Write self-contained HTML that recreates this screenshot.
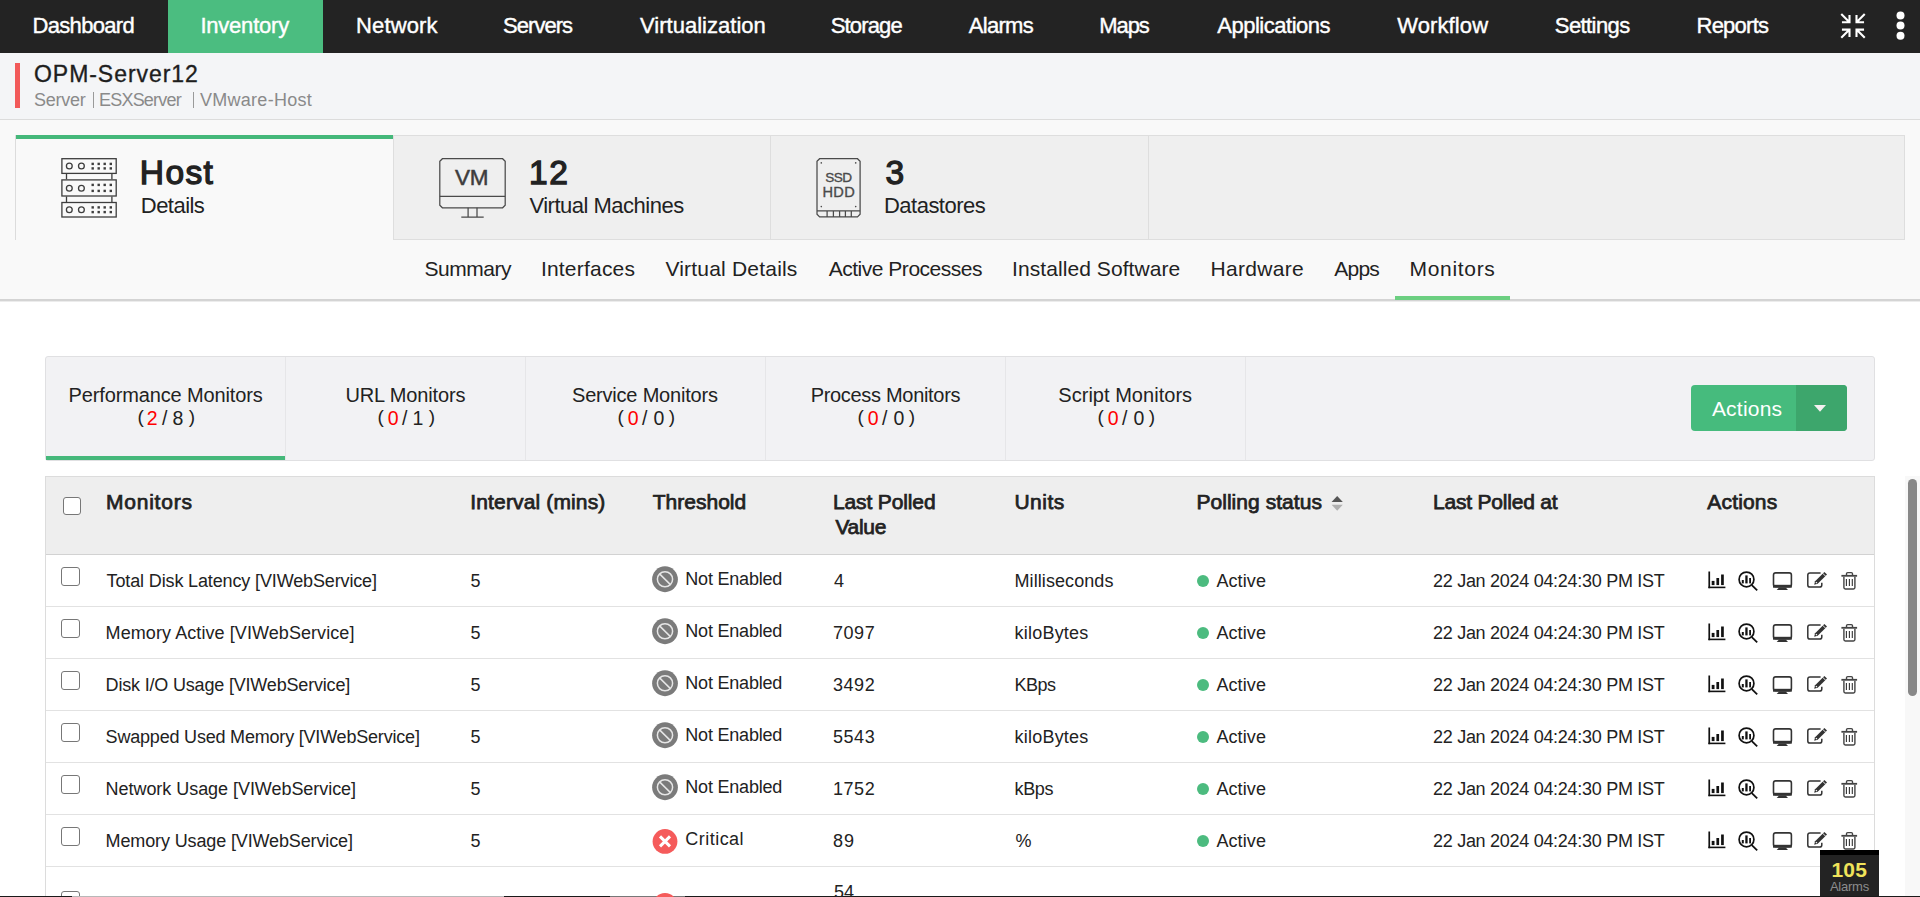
<!DOCTYPE html>
<html><head><meta charset="utf-8"><style>
html,body{margin:0;padding:0;width:1920px;height:897px;overflow:hidden;background:#fff;font-family:'Liberation Sans', sans-serif;}
.t{position:absolute;white-space:pre;}
.b{position:absolute;box-sizing:border-box;}
svg{position:absolute;overflow:visible;}
</style></head><body>
<!-- nav -->
<div class="b" style="left:0;top:0;width:1920px;height:53px;background:#232323"></div>
<div class="b" style="left:168px;top:0;width:155px;height:53px;background:#4bbd80"></div>
<!-- header -->
<div class="b" style="left:0;top:53px;width:1920px;height:66px;background:#f4f5f7"></div>
<div class="b" style="left:0;top:119px;width:1920px;height:1px;background:#dcdcdc"></div>
<div class="b" style="left:15px;top:63px;width:5px;height:45px;background:#f25a5a"></div>
<div class="b" style="left:93px;top:92px;width:1.2px;height:16px;background:#9a9a9a"></div>
<div class="b" style="left:192.5px;top:92px;width:1.2px;height:16px;background:#9a9a9a"></div>
<!-- section -->
<div class="b" style="left:0;top:120px;width:1920px;height:179px;background:#f9f9f9"></div>
<div class="b" style="left:0;top:299px;width:1920px;height:1.5px;background:#d4d4d4"></div>
<div class="b" style="left:0;top:300.5px;width:1920px;height:1.5px;background:#ececec"></div>
<!-- cards -->
<div class="b" style="left:15px;top:135px;width:1px;height:105px;background:#dcdcdc"></div>
<div class="b" style="left:16px;top:135px;width:377px;height:4px;background:#45b87a"></div>
<div class="b" style="left:393px;top:135px;width:1512px;height:105px;background:#efefef;border:1px solid #dedede;border-left:1px solid #dedede"></div>
<div class="b" style="left:770px;top:136px;width:1px;height:103px;background:#dedede"></div>
<div class="b" style="left:1148px;top:136px;width:1px;height:103px;background:#dedede"></div>
<!-- tab underline -->
<div class="b" style="left:1395px;top:296px;width:115px;height:3.5px;background:#6ccf81"></div>
<!-- monitor type panel -->
<div class="b" style="left:45px;top:356px;width:1830px;height:105px;background:#f2f2f4;border:1px solid #e0e0e2;border-radius:3px"></div>
<div class="b" style="left:285px;top:357px;width:1px;height:103px;background:#e6e6e8"></div>
<div class="b" style="left:525px;top:357px;width:1px;height:103px;background:#e6e6e8"></div>
<div class="b" style="left:765px;top:357px;width:1px;height:103px;background:#e6e6e8"></div>
<div class="b" style="left:1005px;top:357px;width:1px;height:103px;background:#e6e6e8"></div>
<div class="b" style="left:1245px;top:357px;width:1px;height:103px;background:#e6e6e8"></div>
<div class="b" style="left:46px;top:456px;width:239px;height:4px;background:#45b87a"></div>
<!-- actions button -->
<div class="b" style="left:1691px;top:385px;width:156px;height:46px;background:#46bb7d;border-radius:4px;overflow:hidden"><div class="b" style="left:105px;top:0;width:51px;height:46px;background:#3da66c"></div></div>
<svg style="left:0;top:0" width="1920" height="897"><path d="M1814 405 L1826 405 L1820 411.8 Z" fill="#f4f0f0"/></svg>
<!-- table -->
<div class="b" style="left:45px;top:476px;width:1830px;height:430px;border:1px solid #dcdcdc;background:#fff"></div>
<div class="b" style="left:46px;top:477px;width:1828px;height:77px;background:#eeeeee"></div>
<div class="b" style="left:46px;top:553.5px;width:1828px;height:1.5px;background:#d2d2d2"></div>
<div class="b" style="left:46px;top:606px;width:1828px;height:1px;background:#e2e2e2"></div>
<div class="b" style="left:46px;top:658px;width:1828px;height:1px;background:#e2e2e2"></div>
<div class="b" style="left:46px;top:710px;width:1828px;height:1px;background:#e2e2e2"></div>
<div class="b" style="left:46px;top:762px;width:1828px;height:1px;background:#e2e2e2"></div>
<div class="b" style="left:46px;top:814px;width:1828px;height:1px;background:#e2e2e2"></div>
<div class="b" style="left:46px;top:866px;width:1828px;height:1px;background:#e2e2e2"></div>
<!-- scrollbar -->
<div class="b" style="left:1905px;top:476px;width:15px;height:421px;background:#f8f8f8"></div>
<div class="b" style="left:1908px;top:479px;width:9px;height:217px;background:#888;border-radius:5px"></div>
<!-- checkboxes -->
<div class="b" style="left:63px;top:497px;width:18px;height:18px;border:1.8px solid #777;border-radius:3px;background:#fff"></div>
<div class="b" style="left:61px;top:567px;width:19px;height:19px;border:1.8px solid #777;border-radius:3px;background:#fff"></div>
<div class="b" style="left:61px;top:619px;width:19px;height:19px;border:1.8px solid #777;border-radius:3px;background:#fff"></div>
<div class="b" style="left:61px;top:671px;width:19px;height:19px;border:1.8px solid #777;border-radius:3px;background:#fff"></div>
<div class="b" style="left:61px;top:723px;width:19px;height:19px;border:1.8px solid #777;border-radius:3px;background:#fff"></div>
<div class="b" style="left:61px;top:775px;width:19px;height:19px;border:1.8px solid #777;border-radius:3px;background:#fff"></div>
<div class="b" style="left:61px;top:827px;width:19px;height:19px;border:1.8px solid #777;border-radius:3px;background:#fff"></div>
<div class="b" style="left:61px;top:891px;width:19px;height:19px;border:1.8px solid #777;border-radius:3px;background:#fff"></div>
<!-- alarm badge -->
<div class="b" style="left:1820px;top:850px;width:59px;height:47px;background:#232323"></div>
<div class="b" style="left:1820px;top:850px;width:59px;height:5px;background:#000"></div>
<!-- bottom line -->
<div class="b" style="left:0;top:896px;width:1920px;height:1px;background:#1a1a1a"></div>
<div class="b" style="left:72px;top:896px;width:432px;height:1px;background:#b8b8b8"></div>
<div class="b" style="left:610px;top:896px;width:75px;height:1px;background:#777"></div>
<!-- icons svg -->
<svg style="left:0;top:0" width="1920" height="897">
 <!-- compress -->
 <g stroke="#fff" stroke-width="2.1" fill="none" stroke-linecap="square">
  <path d="M1842 14.8 L1849 21.8 M1843 22.3 H1849.5 V16"/>
  <path d="M1864 14.8 L1857 21.8 M1863 22.3 H1856.5 V16"/>
  <path d="M1842 37 L1849 30 M1843 29.6 H1849.5 V36"/>
  <path d="M1864 37 L1857 30 M1863 29.6 H1856.5 V36"/>
 </g>
 <circle cx="1900.5" cy="15.4" r="4" fill="#fff"/>
 <circle cx="1900.5" cy="25.6" r="4" fill="#fff"/>
 <circle cx="1900.5" cy="35.7" r="4" fill="#fff"/>
 <!-- server icon -->
 <g stroke="#3d3d3d" stroke-width="1.3" fill="none">
  <rect x="61.9" y="158.7" width="54.3" height="14.7"/>
  <rect x="61.9" y="179.9" width="54.3" height="16.1"/>
  <rect x="61.9" y="202.5" width="54.3" height="14.5"/>
  <path d="M66.5 174 V179.3 M111.9 174 V179.3 M66.5 196.6 V201.9 M111.9 196.6 V201.9"/>
  <circle cx="69.3" cy="166" r="2.9"/><circle cx="81.4" cy="166" r="2.9"/>
  <circle cx="69.3" cy="188.3" r="2.9"/><circle cx="81.4" cy="188.3" r="2.9"/>
  <circle cx="69.3" cy="209.7" r="2.9"/><circle cx="81.4" cy="209.7" r="2.9"/>
 </g>
 <g fill="#3d3d3d">
  <rect x="91.5" y="162.7" width="2.4" height="2.4"/><rect x="97.5" y="162.7" width="2.4" height="2.4"/><rect x="103.5" y="162.7" width="2.4" height="2.4"/><rect x="109.6" y="162.7" width="2.4" height="2.4"/><rect x="91.5" y="167.2" width="2.4" height="2.4"/><rect x="97.5" y="167.2" width="2.4" height="2.4"/><rect x="103.5" y="167.2" width="2.4" height="2.4"/><rect x="109.6" y="167.2" width="2.4" height="2.4"/><rect x="91.5" y="183.7" width="2.4" height="2.4"/><rect x="97.5" y="183.7" width="2.4" height="2.4"/><rect x="103.5" y="183.7" width="2.4" height="2.4"/><rect x="109.6" y="183.7" width="2.4" height="2.4"/><rect x="91.5" y="189.7" width="2.4" height="2.4"/><rect x="97.5" y="189.7" width="2.4" height="2.4"/><rect x="103.5" y="189.7" width="2.4" height="2.4"/><rect x="109.6" y="189.7" width="2.4" height="2.4"/><rect x="91.5" y="206.2" width="2.4" height="2.4"/><rect x="97.5" y="206.2" width="2.4" height="2.4"/><rect x="103.5" y="206.2" width="2.4" height="2.4"/><rect x="109.6" y="206.2" width="2.4" height="2.4"/><rect x="91.5" y="210.9" width="2.4" height="2.4"/><rect x="97.5" y="210.9" width="2.4" height="2.4"/><rect x="103.5" y="210.9" width="2.4" height="2.4"/><rect x="109.6" y="210.9" width="2.4" height="2.4"/>
 </g>
 <!-- VM icon -->
 <g stroke="#4a4a4a" stroke-width="1.25" fill="none">
  <path d="M442.4 158.7 H502.6 L505.2 161.3 V205.2 L502.6 207.8 H442.4 L439.8 205.2 V161.3 Z"/>
  <path d="M439.8 196.3 H505.2 M468.1 207.8 V216.6 M477 207.8 V216.6 M461.3 217.2 H483.7"/>
 </g>
 <text x="471.6" y="184.9" text-anchor="middle" font-family="'Liberation Sans', sans-serif" font-size="22.5" font-weight="400" fill="#3d3d3d" stroke="#3d3d3d" stroke-width="0.5" letter-spacing="-0.4">VM</text>
 <!-- SSD icon -->
 <g stroke="#4a4a4a" stroke-width="1.25" fill="none">
  <path d="M819.6 158.7 H857.5 L860.1 161.3 V214.3 L857.5 216.9 H819.6 L817 214.3 V161.3 Z"/>
  <path d="M817 210.9 H860.1 M827.1 210.9 V216.9 M833.4 210.9 V216.9 M839.6 210.9 V216.9 M845.4 210.9 V216.9 M851.3 210.9 V216.9"/>
 </g>
 <g fill="#4a4a4a"><circle cx="821.3" cy="162.9" r="0.8"/><circle cx="855.7" cy="162.9" r="0.8"/><circle cx="821.3" cy="206.6" r="0.8"/><circle cx="855.7" cy="206.6" r="0.8"/></g>
 <text x="838.3" y="181.6" text-anchor="middle" font-family="'Liberation Sans', sans-serif" font-size="13.6" fill="#4a4a4a" stroke="#4a4a4a" stroke-width="0.35" letter-spacing="-0.6">SSD</text>
 <text x="838.8" y="196.6" text-anchor="middle" font-family="'Liberation Sans', sans-serif" font-size="14.6" fill="#4a4a4a" stroke="#4a4a4a" stroke-width="0.35" letter-spacing="0.4">HDD</text>
 <!-- sort icon -->
 <path d="M1331.6 502 L1337.2 496 L1342.8 502 Z" fill="#555"/>
 <path d="M1331.6 504.7 L1337.2 510.8 L1342.8 504.7 Z" fill="#b0b0b0"/>
 <defs>
<g id="notenabled"><circle cx="665" cy="579.25" r="12.9" fill="#7b7b7b"/><circle cx="665" cy="579.25" r="7.6" fill="none" stroke="#e6e6e6" stroke-width="1.5"/><path d="M659.6 573.9 L670.4 584.6" stroke="#e6e6e6" stroke-width="1.5"/></g>
<g id="acts">
 <g fill="#111"><rect x="1708.4" y="571.5" width="1.7" height="16.7"/><rect x="1708.4" y="586.6" width="17" height="1.6"/>
 <rect x="1711.7" y="580.9" width="2.8" height="4.2"/><rect x="1716.4" y="578" width="2.7" height="7.1"/><rect x="1721.1" y="574.5" width="2.7" height="10.6"/>
 <rect x="1741.8" y="580" width="2" height="3.4"/><rect x="1745.3" y="575.4" width="2.3" height="8"/><rect x="1749.2" y="578" width="1.8" height="5.4"/></g>
 <circle cx="1746.5" cy="579.45" r="7.4" fill="none" stroke="#111" stroke-width="1.7"/>
 <path d="M1751.8 585.1 L1757.2 590.4" stroke="#111" stroke-width="1.8"/>
 <rect x="1773.5" y="572.9" width="17.9" height="13.8" rx="2.2" fill="none" stroke="#333" stroke-width="1.6"/>
 <rect x="1773" y="584.8" width="18.8" height="2.9" fill="#333"/>
 <path d="M1779 587.6 H1785.7 L1788 589.9 H1776.7 Z" fill="#333"/>
 <path d="M1820.6 572.9 H1810 Q1807.8 572.9 1807.8 575.1 V584.9 Q1807.8 587.1 1810 587.1 H1819.6 Q1821.8 587.1 1821.8 584.9 V582.7" fill="none" stroke="#333" stroke-width="1.5"/>
 <path d="M1814.2 584.7 L1815.1 581.2 L1824.4 571.9 L1827 574.5 L1817.7 583.8 Z" fill="#333"/>
 <path d="M1822.6 573.2 L1825.7 576.3" stroke="#fff" stroke-width="0.9"/>
 <path d="M1815.9 582.1 L1816.9 583.1" stroke="#fff" stroke-width="1.2"/>
 <rect x="1841.4" y="574.9" width="15.7" height="1.8" fill="#444"/>
 <path d="M1846.5 574.9 V573.8 Q1846.5 572.6 1847.7 572.6 H1851.3 Q1852.5 572.6 1852.5 573.8 V574.9" fill="none" stroke="#444" stroke-width="1.4"/>
 <path d="M1843.9 576.7 V587.6 Q1843.9 589 1845.3 589 H1853.5 Q1854.9 589 1854.9 587.6 V576.7" fill="none" stroke="#444" stroke-width="1.4"/>
 <path d="M1846.4 579 V585.9 M1849.4 579 V585.9 M1852.3 579 V585.9" stroke="#333" stroke-width="1.1"/>
</g>
</defs>
<use href="#notenabled" y="0"/>
<use href="#acts" y="0"/>
<circle cx="1203" cy="581" r="6" fill="#4cbb7f"/>
<use href="#notenabled" y="52"/>
<use href="#acts" y="52"/>
<circle cx="1203" cy="633" r="6" fill="#4cbb7f"/>
<use href="#notenabled" y="104"/>
<use href="#acts" y="104"/>
<circle cx="1203" cy="685" r="6" fill="#4cbb7f"/>
<use href="#notenabled" y="156"/>
<use href="#acts" y="156"/>
<circle cx="1203" cy="737" r="6" fill="#4cbb7f"/>
<use href="#notenabled" y="208"/>
<use href="#acts" y="208"/>
<circle cx="1203" cy="789" r="6" fill="#4cbb7f"/>
<use href="#acts" y="260"/>
<circle cx="1203" cy="841" r="6" fill="#4cbb7f"/>
<circle cx="665" cy="841.4" r="12.4" fill="#f55b5b"/><path d="M660 836.4 L670 846.4 M670 836.4 L660 846.4" stroke="#fff" stroke-width="3"/>
<circle cx="665" cy="905.4" r="12.4" fill="#f55b5b"/>
</svg>

<div class="t" style="left:32.60px;top:15.20px;font-size:22px;line-height:22px;font-weight:400;color:#fff;letter-spacing:-0.700px;-webkit-text-stroke:0.4px #fff;">Dashboard</div><div class="t" style="left:200.40px;top:15.20px;font-size:22px;line-height:22px;font-weight:400;color:#fff;letter-spacing:-0.213px;-webkit-text-stroke:0.4px #fff;">Inventory</div><div class="t" style="left:356.00px;top:15.20px;font-size:22px;line-height:22px;font-weight:400;color:#fff;letter-spacing:0.133px;-webkit-text-stroke:0.4px #fff;">Network</div><div class="t" style="left:503.00px;top:15.20px;font-size:22px;line-height:22px;font-weight:400;color:#fff;letter-spacing:-0.950px;-webkit-text-stroke:0.4px #fff;">Servers</div><div class="t" style="left:640.00px;top:15.20px;font-size:22px;line-height:22px;font-weight:400;color:#fff;letter-spacing:0.023px;-webkit-text-stroke:0.4px #fff;">Virtualization</div><div class="t" style="left:830.70px;top:15.20px;font-size:22px;line-height:22px;font-weight:400;color:#fff;letter-spacing:-0.833px;-webkit-text-stroke:0.4px #fff;">Storage</div><div class="t" style="left:968.70px;top:15.20px;font-size:22px;line-height:22px;font-weight:400;color:#fff;letter-spacing:-0.680px;-webkit-text-stroke:0.4px #fff;">Alarms</div><div class="t" style="left:1099.30px;top:15.20px;font-size:22px;line-height:22px;font-weight:400;color:#fff;letter-spacing:-1.100px;-webkit-text-stroke:0.4px #fff;">Maps</div><div class="t" style="left:1217.20px;top:15.20px;font-size:22px;line-height:22px;font-weight:400;color:#fff;letter-spacing:-0.473px;-webkit-text-stroke:0.4px #fff;">Applications</div><div class="t" style="left:1397.20px;top:15.20px;font-size:22px;line-height:22px;font-weight:400;color:#fff;letter-spacing:0.114px;-webkit-text-stroke:0.4px #fff;">Workflow</div><div class="t" style="left:1554.80px;top:15.20px;font-size:22px;line-height:22px;font-weight:400;color:#fff;letter-spacing:-0.586px;-webkit-text-stroke:0.4px #fff;">Settings</div><div class="t" style="left:1696.50px;top:15.20px;font-size:22px;line-height:22px;font-weight:400;color:#fff;letter-spacing:-0.750px;-webkit-text-stroke:0.4px #fff;">Reports</div><div class="t" style="left:34.00px;top:62.70px;font-size:23px;line-height:23px;font-weight:400;color:#1e1e1e;letter-spacing:0.955px;-webkit-text-stroke:0.35px #1e1e1e;">OPM-Server12</div><div class="t" style="left:34.00px;top:91.30px;font-size:18px;line-height:18px;font-weight:400;color:#8a8a8a;letter-spacing:-0.240px;">Server</div><div class="t" style="left:99.00px;top:91.30px;font-size:18px;line-height:18px;font-weight:400;color:#8a8a8a;letter-spacing:-0.788px;">ESXServer</div><div class="t" style="left:200.00px;top:91.30px;font-size:18px;line-height:18px;font-weight:400;color:#8a8a8a;letter-spacing:0.270px;">VMware-Host</div><div class="t" style="left:139.80px;top:155.90px;font-size:33.5px;line-height:33.5px;font-weight:400;color:#222;letter-spacing:1.400px;-webkit-text-stroke:1.3px #222;">Host</div><div class="t" style="left:140.80px;top:195.00px;font-size:22px;line-height:22px;font-weight:400;color:#222;letter-spacing:-0.533px;">Details</div><div class="t" style="left:529.00px;top:156.20px;font-size:33.5px;line-height:33.5px;font-weight:400;color:#222;letter-spacing:1.700px;-webkit-text-stroke:1.3px #222;">12</div><div class="t" style="left:529.40px;top:195.00px;font-size:22px;line-height:22px;font-weight:400;color:#222;letter-spacing:-0.493px;">Virtual Machines</div><div class="t" style="left:885.40px;top:156.00px;font-size:33.5px;line-height:33.5px;font-weight:400;color:#222;letter-spacing:0.000px;-webkit-text-stroke:1.3px #222;">3</div><div class="t" style="left:884.00px;top:195.00px;font-size:22px;line-height:22px;font-weight:400;color:#222;letter-spacing:-0.522px;">Datastores</div><div class="t" style="left:424.40px;top:257.90px;font-size:21px;line-height:21px;font-weight:400;color:#222;letter-spacing:-0.450px;">Summary</div><div class="t" style="left:540.90px;top:257.90px;font-size:21px;line-height:21px;font-weight:400;color:#222;letter-spacing:0.211px;">Interfaces</div><div class="t" style="left:665.40px;top:257.90px;font-size:21px;line-height:21px;font-weight:400;color:#222;letter-spacing:0.200px;">Virtual Details</div><div class="t" style="left:828.70px;top:257.90px;font-size:21px;line-height:21px;font-weight:400;color:#222;letter-spacing:-0.480px;">Active Processes</div><div class="t" style="left:1012.00px;top:257.90px;font-size:21px;line-height:21px;font-weight:400;color:#222;letter-spacing:0.076px;">Installed Software</div><div class="t" style="left:1210.40px;top:257.90px;font-size:21px;line-height:21px;font-weight:400;color:#222;letter-spacing:0.329px;">Hardware</div><div class="t" style="left:1334.20px;top:257.90px;font-size:21px;line-height:21px;font-weight:400;color:#222;letter-spacing:-0.733px;">Apps</div><div class="t" style="left:1409.60px;top:257.90px;font-size:21px;line-height:21px;font-weight:400;color:#222;letter-spacing:0.671px;">Monitors</div><div class="t" style="left:68.50px;top:384.90px;font-size:20px;line-height:20px;font-weight:400;color:#222;letter-spacing:-0.132px;">Performance Monitors</div><div class="t" style="left:137.60px;top:407.20px;font-size:19px;line-height:19px;font-weight:400;color:#222;letter-spacing:0.000px;">(</div><div class="t" style="left:146.65px;top:408.50px;font-size:19.5px;line-height:19.5px;font-weight:400;color:#f00;letter-spacing:0.000px;">2</div><div class="t" style="left:161.90px;top:408.50px;font-size:19.5px;line-height:19.5px;font-weight:400;color:#222;letter-spacing:0.000px;">/</div><div class="t" style="left:172.40px;top:408.50px;font-size:19.5px;line-height:19.5px;font-weight:400;color:#222;letter-spacing:0.000px;">8</div><div class="t" style="left:188.70px;top:407.20px;font-size:19px;line-height:19px;font-weight:400;color:#222;letter-spacing:0.000px;">)</div><div class="t" style="left:345.40px;top:384.90px;font-size:20px;line-height:20px;font-weight:400;color:#222;letter-spacing:-0.136px;">URL Monitors</div><div class="t" style="left:377.60px;top:407.20px;font-size:19px;line-height:19px;font-weight:400;color:#222;letter-spacing:0.000px;">(</div><div class="t" style="left:387.65px;top:408.50px;font-size:19.5px;line-height:19.5px;font-weight:400;color:#f00;letter-spacing:0.000px;">0</div><div class="t" style="left:401.90px;top:408.50px;font-size:19.5px;line-height:19.5px;font-weight:400;color:#222;letter-spacing:0.000px;">/</div><div class="t" style="left:412.40px;top:408.50px;font-size:19.5px;line-height:19.5px;font-weight:400;color:#222;letter-spacing:0.000px;">1</div><div class="t" style="left:428.70px;top:407.20px;font-size:19px;line-height:19px;font-weight:400;color:#222;letter-spacing:0.000px;">)</div><div class="t" style="left:572.00px;top:384.90px;font-size:20px;line-height:20px;font-weight:400;color:#222;letter-spacing:-0.200px;">Service Monitors</div><div class="t" style="left:617.60px;top:407.20px;font-size:19px;line-height:19px;font-weight:400;color:#222;letter-spacing:0.000px;">(</div><div class="t" style="left:627.65px;top:408.50px;font-size:19.5px;line-height:19.5px;font-weight:400;color:#f00;letter-spacing:0.000px;">0</div><div class="t" style="left:641.90px;top:408.50px;font-size:19.5px;line-height:19.5px;font-weight:400;color:#222;letter-spacing:0.000px;">/</div><div class="t" style="left:653.40px;top:408.50px;font-size:19.5px;line-height:19.5px;font-weight:400;color:#222;letter-spacing:0.000px;">0</div><div class="t" style="left:668.70px;top:407.20px;font-size:19px;line-height:19px;font-weight:400;color:#222;letter-spacing:0.000px;">)</div><div class="t" style="left:810.70px;top:384.90px;font-size:20px;line-height:20px;font-weight:400;color:#222;letter-spacing:-0.313px;">Process Monitors</div><div class="t" style="left:857.60px;top:407.20px;font-size:19px;line-height:19px;font-weight:400;color:#222;letter-spacing:0.000px;">(</div><div class="t" style="left:867.65px;top:408.50px;font-size:19.5px;line-height:19.5px;font-weight:400;color:#f00;letter-spacing:0.000px;">0</div><div class="t" style="left:881.90px;top:408.50px;font-size:19.5px;line-height:19.5px;font-weight:400;color:#222;letter-spacing:0.000px;">/</div><div class="t" style="left:893.40px;top:408.50px;font-size:19.5px;line-height:19.5px;font-weight:400;color:#222;letter-spacing:0.000px;">0</div><div class="t" style="left:908.70px;top:407.20px;font-size:19px;line-height:19px;font-weight:400;color:#222;letter-spacing:0.000px;">)</div><div class="t" style="left:1058.30px;top:384.90px;font-size:20px;line-height:20px;font-weight:400;color:#222;letter-spacing:0.029px;">Script Monitors</div><div class="t" style="left:1097.60px;top:407.20px;font-size:19px;line-height:19px;font-weight:400;color:#222;letter-spacing:0.000px;">(</div><div class="t" style="left:1107.65px;top:408.50px;font-size:19.5px;line-height:19.5px;font-weight:400;color:#f00;letter-spacing:0.000px;">0</div><div class="t" style="left:1121.90px;top:408.50px;font-size:19.5px;line-height:19.5px;font-weight:400;color:#222;letter-spacing:0.000px;">/</div><div class="t" style="left:1133.40px;top:408.50px;font-size:19.5px;line-height:19.5px;font-weight:400;color:#222;letter-spacing:0.000px;">0</div><div class="t" style="left:1148.70px;top:407.20px;font-size:19px;line-height:19px;font-weight:400;color:#222;letter-spacing:0.000px;">)</div><div class="t" style="left:1711.90px;top:398.00px;font-size:21px;line-height:21px;font-weight:400;color:#fff;letter-spacing:0.217px;">Actions</div><div class="t" style="left:105.90px;top:491.00px;font-size:21px;line-height:21px;font-weight:400;color:#222;letter-spacing:0.800px;-webkit-text-stroke:0.75px #222;">Monitors</div><div class="t" style="left:470.30px;top:491.00px;font-size:21px;line-height:21px;font-weight:400;color:#222;letter-spacing:0.143px;-webkit-text-stroke:0.75px #222;">Interval (mins)</div><div class="t" style="left:652.80px;top:491.00px;font-size:21px;line-height:21px;font-weight:400;color:#222;letter-spacing:0.000px;-webkit-text-stroke:0.75px #222;">Threshold</div><div class="t" style="left:832.90px;top:491.00px;font-size:21px;line-height:21px;font-weight:400;color:#222;letter-spacing:-0.120px;-webkit-text-stroke:0.75px #222;">Last Polled</div><div class="t" style="left:835.50px;top:515.90px;font-size:21px;line-height:21px;font-weight:400;color:#222;letter-spacing:-0.325px;-webkit-text-stroke:0.75px #222;">Value</div><div class="t" style="left:1014.40px;top:491.00px;font-size:21px;line-height:21px;font-weight:400;color:#222;letter-spacing:0.525px;-webkit-text-stroke:0.75px #222;">Units</div><div class="t" style="left:1196.40px;top:491.00px;font-size:21px;line-height:21px;font-weight:400;color:#222;letter-spacing:0.046px;-webkit-text-stroke:0.75px #222;">Polling status</div><div class="t" style="left:1433.00px;top:491.00px;font-size:21px;line-height:21px;font-weight:400;color:#222;letter-spacing:-0.208px;-webkit-text-stroke:0.75px #222;">Last Polled at</div><div class="t" style="left:1707.30px;top:491.00px;font-size:21px;line-height:21px;font-weight:400;color:#222;letter-spacing:0.167px;-webkit-text-stroke:0.75px #222;">Actions</div><div class="t" style="left:106.60px;top:572.00px;font-size:18px;line-height:18px;font-weight:400;color:#222;letter-spacing:-0.137px;">Total Disk Latency [VIWebService]</div><div class="t" style="left:470.40px;top:572.00px;font-size:18px;line-height:18px;font-weight:400;color:#222;letter-spacing:0.000px;">5</div><div class="t" style="left:685.30px;top:570.00px;font-size:18px;line-height:18px;font-weight:400;color:#222;letter-spacing:-0.205px;">Not Enabled</div><div class="t" style="left:834.00px;top:572.00px;font-size:18px;line-height:18px;font-weight:400;color:#222;letter-spacing:0.000px;">4</div><div class="t" style="left:1014.50px;top:572.00px;font-size:18px;line-height:18px;font-weight:400;color:#222;letter-spacing:0.082px;">Milliseconds</div><div class="t" style="left:1216.40px;top:572.00px;font-size:18px;line-height:18px;font-weight:400;color:#222;letter-spacing:0.100px;">Active</div><div class="t" style="left:1433.00px;top:572.00px;font-size:18px;line-height:18px;font-weight:400;color:#222;letter-spacing:-0.285px;">22 Jan 2024 04:24:30 PM IST</div><div class="t" style="left:105.60px;top:624.00px;font-size:18px;line-height:18px;font-weight:400;color:#222;letter-spacing:0.078px;">Memory Active [VIWebService]</div><div class="t" style="left:470.40px;top:624.00px;font-size:18px;line-height:18px;font-weight:400;color:#222;letter-spacing:0.000px;">5</div><div class="t" style="left:685.30px;top:622.00px;font-size:18px;line-height:18px;font-weight:400;color:#222;letter-spacing:-0.205px;">Not Enabled</div><div class="t" style="left:833.00px;top:624.00px;font-size:18px;line-height:18px;font-weight:400;color:#222;letter-spacing:0.533px;">7097</div><div class="t" style="left:1014.50px;top:624.00px;font-size:18px;line-height:18px;font-weight:400;color:#222;letter-spacing:0.225px;">kiloBytes</div><div class="t" style="left:1216.40px;top:624.00px;font-size:18px;line-height:18px;font-weight:400;color:#222;letter-spacing:0.100px;">Active</div><div class="t" style="left:1433.00px;top:624.00px;font-size:18px;line-height:18px;font-weight:400;color:#222;letter-spacing:-0.285px;">22 Jan 2024 04:24:30 PM IST</div><div class="t" style="left:105.60px;top:676.00px;font-size:18px;line-height:18px;font-weight:400;color:#222;letter-spacing:-0.182px;">Disk I/O Usage [VIWebService]</div><div class="t" style="left:470.40px;top:676.00px;font-size:18px;line-height:18px;font-weight:400;color:#222;letter-spacing:0.000px;">5</div><div class="t" style="left:685.30px;top:674.00px;font-size:18px;line-height:18px;font-weight:400;color:#222;letter-spacing:-0.205px;">Not Enabled</div><div class="t" style="left:833.00px;top:676.00px;font-size:18px;line-height:18px;font-weight:400;color:#222;letter-spacing:0.533px;">3492</div><div class="t" style="left:1014.50px;top:676.00px;font-size:18px;line-height:18px;font-weight:400;color:#222;letter-spacing:-0.467px;">KBps</div><div class="t" style="left:1216.40px;top:676.00px;font-size:18px;line-height:18px;font-weight:400;color:#222;letter-spacing:0.100px;">Active</div><div class="t" style="left:1433.00px;top:676.00px;font-size:18px;line-height:18px;font-weight:400;color:#222;letter-spacing:-0.285px;">22 Jan 2024 04:24:30 PM IST</div><div class="t" style="left:105.60px;top:728.00px;font-size:18px;line-height:18px;font-weight:400;color:#222;letter-spacing:-0.197px;">Swapped Used Memory [VIWebService]</div><div class="t" style="left:470.40px;top:728.00px;font-size:18px;line-height:18px;font-weight:400;color:#222;letter-spacing:0.000px;">5</div><div class="t" style="left:685.30px;top:726.00px;font-size:18px;line-height:18px;font-weight:400;color:#222;letter-spacing:-0.205px;">Not Enabled</div><div class="t" style="left:833.00px;top:728.00px;font-size:18px;line-height:18px;font-weight:400;color:#222;letter-spacing:0.533px;">5543</div><div class="t" style="left:1014.50px;top:728.00px;font-size:18px;line-height:18px;font-weight:400;color:#222;letter-spacing:0.225px;">kiloBytes</div><div class="t" style="left:1216.40px;top:728.00px;font-size:18px;line-height:18px;font-weight:400;color:#222;letter-spacing:0.100px;">Active</div><div class="t" style="left:1433.00px;top:728.00px;font-size:18px;line-height:18px;font-weight:400;color:#222;letter-spacing:-0.285px;">22 Jan 2024 04:24:30 PM IST</div><div class="t" style="left:105.60px;top:780.00px;font-size:18px;line-height:18px;font-weight:400;color:#222;letter-spacing:-0.048px;">Network Usage [VIWebService]</div><div class="t" style="left:470.40px;top:780.00px;font-size:18px;line-height:18px;font-weight:400;color:#222;letter-spacing:0.000px;">5</div><div class="t" style="left:685.30px;top:778.00px;font-size:18px;line-height:18px;font-weight:400;color:#222;letter-spacing:-0.205px;">Not Enabled</div><div class="t" style="left:833.00px;top:780.00px;font-size:18px;line-height:18px;font-weight:400;color:#222;letter-spacing:0.533px;">1752</div><div class="t" style="left:1014.50px;top:780.00px;font-size:18px;line-height:18px;font-weight:400;color:#222;letter-spacing:-0.367px;">kBps</div><div class="t" style="left:1216.40px;top:780.00px;font-size:18px;line-height:18px;font-weight:400;color:#222;letter-spacing:0.100px;">Active</div><div class="t" style="left:1433.00px;top:780.00px;font-size:18px;line-height:18px;font-weight:400;color:#222;letter-spacing:-0.285px;">22 Jan 2024 04:24:30 PM IST</div><div class="t" style="left:105.60px;top:832.00px;font-size:18px;line-height:18px;font-weight:400;color:#222;letter-spacing:-0.131px;">Memory Usage [VIWebService]</div><div class="t" style="left:470.40px;top:832.00px;font-size:18px;line-height:18px;font-weight:400;color:#222;letter-spacing:0.000px;">5</div><div class="t" style="left:685.30px;top:830.00px;font-size:18px;line-height:18px;font-weight:400;color:#222;letter-spacing:0.471px;">Critical</div><div class="t" style="left:833.00px;top:832.00px;font-size:18px;line-height:18px;font-weight:400;color:#222;letter-spacing:1.100px;">89</div><div class="t" style="left:1015.50px;top:832.00px;font-size:18px;line-height:18px;font-weight:400;color:#222;letter-spacing:0.000px;">%</div><div class="t" style="left:1216.40px;top:832.00px;font-size:18px;line-height:18px;font-weight:400;color:#222;letter-spacing:0.100px;">Active</div><div class="t" style="left:1433.00px;top:832.00px;font-size:18px;line-height:18px;font-weight:400;color:#222;letter-spacing:-0.285px;">22 Jan 2024 04:24:30 PM IST</div><div class="t" style="left:833.90px;top:882.50px;font-size:18px;line-height:18px;font-weight:400;color:#222;letter-spacing:0.000px;">54</div><div class="t" style="left:1831.40px;top:858.90px;font-size:21px;line-height:21px;font-weight:700;color:#f0e35a;letter-spacing:0.200px;">105</div><div class="t" style="left:1829.90px;top:879.90px;font-size:13px;line-height:13px;font-weight:400;color:#8c8c8c;letter-spacing:-0.240px;">Alarms</div>
</body></html>
